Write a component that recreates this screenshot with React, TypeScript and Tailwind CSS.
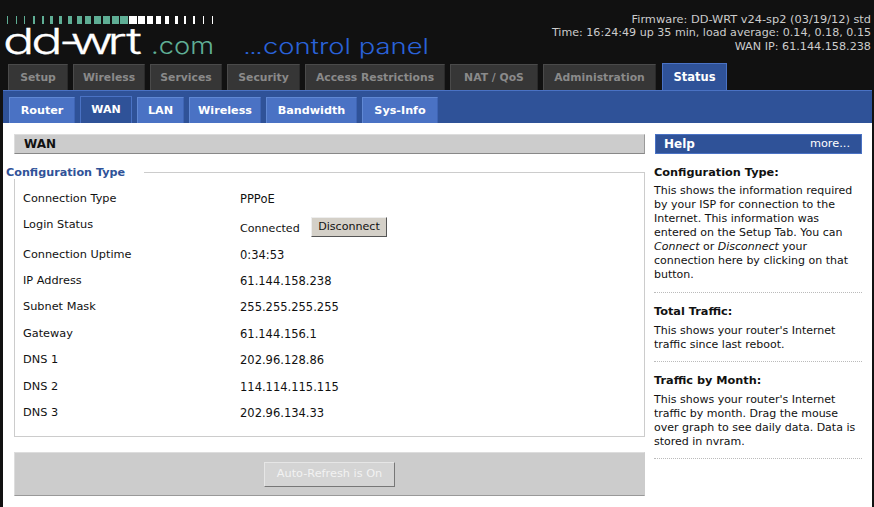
const mainTabs = [
  { label: "Setup", w: "w-[60px]" },
  { label: "Wireless", w: "w-[72px]" },
  { label: "Services", w: "w-[72px]" },
  { label: "Security", w: "w-[73px]" },
  { label: "Access Restrictions", w: "w-[140px]" },
  { label: "NAT / QoS", w: "w-[88px]" },
  { label: "Administration", w: "w-[113px]" },
];

const subTabs = [
  { label: "Router", w: "w-[66px]" },
  { label: "WAN", w: "w-[52px]", active: true },
  { label: "LAN", w: "w-[47px]" },
  { label: "Wireless", w: "w-[72px]" },
  { label: "Bandwidth", w: "w-[91px]" },
  { label: "Sys-Info", w: "w-[76px]" },
];

const rows = [
  { k: "Connection Type", v: "PPPoE", h: "h-[26px]" },
  { k: "Login Status", v: "Connected", h: "h-[30px]", button: true },
  { k: "Connection Uptime", v: "0:34:53", h: "h-[26px]" },
  { k: "IP Address", v: "61.144.158.238", h: "h-[26px]" },
  { k: "Subnet Mask", v: "255.255.255.255", h: "h-[26px]" },
  { k: "Gateway", v: "61.144.156.1", h: "h-[27px]" },
  { k: "DNS 1", v: "202.96.128.86", h: "h-[26px]" },
  { k: "DNS 2", v: "114.114.115.115", h: "h-[27px]" },
  { k: "DNS 3", v: "202.96.134.33", h: "h-[26px]" },
];

const ticks: [number, number, string][] = [
  [7, 1, "#5fae95"], [16, 1, "#5fae95"], [24, 1, "#5fae95"], [33, 2, "#5fae95"], [42, 2, "#5fae95"],
  [50, 3, "#5fae95"], [59, 3, "#5fae95"], [68, 4, "#5fae95"], [77, 5, "#5fae95"], [85, 6, "#5fae95"],
  [94, 7, "#5fae95"], [103, 7, "#5fae95"], [112, 7, "#5fae95"], [120, 8, "#5fae95"],
  [129, 8, "#ffffff"], [138, 7, "#ffffff"], [147, 6, "#ffffff"], [156, 5, "#ffffff"], [165, 4, "#ffffff"],
  [175, 3, "#ffffff"], [184, 2, "#ffffff"], [193, 2, "#ffffff"], [203, 1, "#ffffff"], [212, 1, "#ffffff"],
];

function Logo() {
  return (
    <svg width="440" height="63" viewBox="0 0 440 63" className="block">
      {ticks.map(([x, w, c]) => (
        <rect key={x} x={x} y={16} width={w} height={8} fill={c} />
      ))}
      <g transform="translate(3,54) scale(1.45,1)">
        <text x="0 19.5 38.5 46.5 72 85" fontFamily="Inter, sans-serif" fontWeight="300" fontSize="36" fill="#fff" stroke="#fff" strokeWidth="0.3">dd-wrt</text>
      </g>
      <text x="151" y="54" textLength="63" lengthAdjust="spacingAndGlyphs" fontFamily="Inter, sans-serif" fontWeight="300" fontSize="23" fill="#5fae95">.com</text>
      <text x="244" y="54" textLength="18" lengthAdjust="spacingAndGlyphs" fontFamily="Inter, sans-serif" fontWeight="400" fontSize="16" fill="#2a62d8">...</text>
      <text x="263" y="54" textLength="166" lengthAdjust="spacingAndGlyphs" fontFamily="Inter, sans-serif" fontWeight="300" fontSize="22" fill="#2a62d8">control panel</text>
    </svg>
  );
}

export default function App() {
  return (
    <div className="w-[874px] h-[507px] overflow-hidden bg-[#111111] font-['DejaVu_Sans',sans-serif] text-[11.3px] leading-[14px] text-[#111111]">
      <div className="flex h-[63px] justify-between">
        <Logo />
        <div className="pt-[12px] pr-[3px] text-right text-[11.1px] text-[#cccccc]">
          <div className="text-[11.35px]">Firmware: DD-WRT v24-sp2 (03/19/12) std</div>
          <div>Time: 16:24:49 up 35 min, load average: 0.14, 0.18, 0.15</div>
          <div className="text-[11.2px]">WAN IP: 61.144.158.238</div>
        </div>
      </div>

      <div className="flex h-[27px] items-end gap-[5px] pl-[8px]">
        {mainTabs.map((t) => (
          <div
            key={t.label}
            className={`${t.w} h-[26px] flex items-center justify-center border-t border-l border-r border-t-[#4a4a4a] border-l-[#4a4a4a] border-r-[#2a2a2a] bg-[#363636] text-[10.8px] font-bold text-[#8a8a8a]`}
          >
            {t.label}
          </div>
        ))}
        <div className="ml-px h-[27px] w-[65px] flex items-center justify-center border-t border-l border-r border-[#4a72c4] bg-[#2f5298] text-[11.5px] font-bold text-white">
          Status
        </div>
      </div>

      <div className="ml-[3px] mr-[2px] h-[33px] flex items-end gap-[5px] border-t border-[#4a72c4] bg-[#2f5298] pl-[6px]">
        {subTabs.map((t) => (
          <div
            key={t.label}
            className={
              t.active
                ? `${t.w} h-[27px] flex items-center justify-center border-t border-l border-r border-[#4a72c4] bg-[#2f5298] text-[11px] font-bold text-white`
                : `${t.w} h-[26px] flex items-center justify-center border-t border-l border-r border-t-[#6088d4] border-l-[#6088d4] border-r-[#3e64b4] bg-[#4a72c4] text-[11.2px] font-bold text-white`
            }
          >
            {t.label}
          </div>
        ))}
      </div>

      <div className="ml-[3px] mr-[2px] h-[384px] bg-white flex">
        <div className="w-[642px] pl-[11px] pt-[11px] flex-none">
          <div className="h-[20px] w-[631px] flex items-center bg-[#cccccc] border border-t-[#dddddd] border-l-[#dddddd] border-r-[#999999] border-b-[#888888] pl-[9px] text-[12px] font-bold">
            WAN
          </div>

          <fieldset className="mt-[11px] w-[631px] h-[272px] border border-[#cccccc] pl-[8px]">
            <legend className="-ml-[17px] pr-[19px] text-[11.2px] font-bold text-[#2f5298]">
              <span className="relative top-px">Configuration Type</span>
            </legend>
            <div className="pt-[7px]">
              {rows.map((r) => (
                <div key={r.k} className={`${r.h} flex items-center`}>
                  <div className={r.button ? "w-[217px] flex-none pb-[4px]" : "w-[217px] flex-none"}>{r.k}</div>
                  <div className="flex items-center text-[11.5px]">
                    <span className={r.button ? "w-[71px] flex-none pt-[3px] text-[11.1px]" : ""}>{r.v}</span>
                    {r.button && (
                      <button className="h-[20px] w-[76px] flex items-center justify-center bg-[#d4d0c8] border border-t-[#eeeeee] border-l-[#eeeeee] border-r-[#555555] border-b-[#555555] text-[11.1px]">
                        Disconnect
                      </button>
                    )}
                  </div>
                </div>
              ))}
            </div>
          </fieldset>

          <div className="mt-[15px] h-[44px] w-[631px] flex items-center justify-center bg-[#cccccc] border border-t-[#dddddd] border-l-[#dddddd] border-r-[#cccccc] border-b-[#999999]">
            <button className="h-[25px] w-[131px] bg-[#d4d4d4] border border-t-[#e6e6e6] border-l-[#e6e6e6] border-r-[#777777] border-b-[#777777] text-[#f2f2f2]">
              Auto-Refresh is On
            </button>
          </div>
        </div>

        <div className="w-[208px] ml-[9px] pt-[11px] flex-none">
          <div className="ml-px h-[20px] w-[207px] flex items-center justify-between bg-[#2f5298] border border-[#4a72c4] pl-[8px] pr-[11px] text-white">
            <span className="text-[12px] font-bold">Help</span>
            <span>more...</span>
          </div>

          <div className="mt-[12px] font-bold">Configuration Type:</div>
          <p className="mt-[4px] pb-[10px] border-b border-dotted border-[#bbbbbb] text-[11px]">
            This shows the information required<br />
            by your ISP for connection to the<br />
            Internet. This information was<br />
            entered on the Setup Tab. You can<br />
            <em>Connect</em> or <em>Disconnect</em> your<br />
            connection here by clicking on that<br />
            button.
          </p>

          <div className="mt-[12px] font-bold">Total Traffic:</div>
          <p className="mt-[5px] pb-[9px] border-b border-dotted border-[#bbbbbb] text-[11px]">
            This shows your router's Internet<br />
            traffic since last reboot.
          </p>

          <div className="mt-[12px] font-bold">Traffic by Month:</div>
          <p className="mt-[5px] pb-[9px] border-b border-dotted border-[#bbbbbb] text-[11px]">
            This shows your router's Internet<br />
            traffic by month. Drag the mouse<br />
            over graph to see daily data. Data is<br />
            stored in nvram.
          </p>
        </div>
      </div>
    </div>
  );
}
